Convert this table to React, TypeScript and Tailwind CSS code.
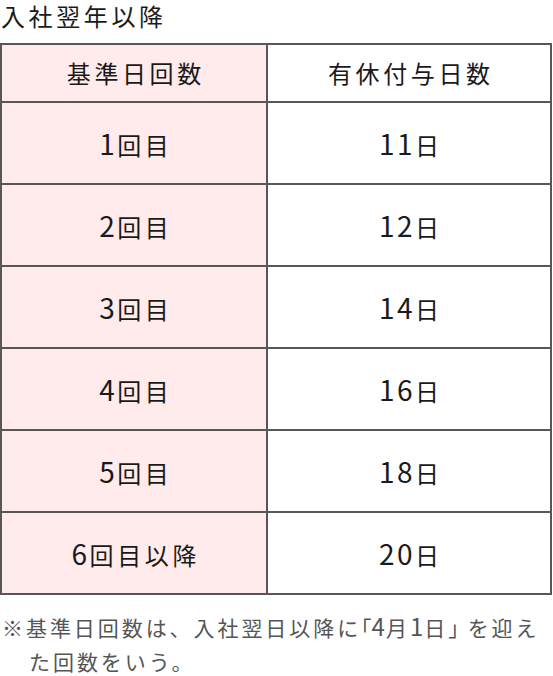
import React from "react";

const rows = [
  ["1回目", "11日"],
  ["2回目", "12日"],
  ["3回目", "14日"],
  ["4回目", "16日"],
  ["5回目", "18日"],
  ["6回目以降", "20日"],
];

function Cell({ text }: { text: string }) {
  const parts = text.split(/(\d+)/).filter((p) => p.length > 0);
  return (
    <span className="mr-[-0.15em]">
      {parts.map((p, i) =>
        /^\d+$/.test(p) ? (
          <span key={i} className="text-[28px] tracking-[2.5px]">
            {p}
          </span>
        ) : (
          <span key={i}>{p}</span>
        )
      )}
    </span>
  );
}

export default function App() {
  return (
    <div
      className="w-[553px] h-[676px] bg-white text-[#1a1a1a]"
      style={{ fontFamily: '"Noto Sans CJK JP", "Noto Sans", sans-serif' }}
    >
      <h1 className="pt-[1px] mb-[12px] text-[24px] leading-[30px] tracking-[0.15em] pl-[1px] font-normal">入社翌年以降</h1>
      <div className="w-[552px] bg-[#575757] p-[2px] grid grid-cols-[264px_282px] gap-[2px]">
        <div className="h-[56px] bg-[#ffebeb] flex items-center justify-center text-[24px] tracking-[0.15em]">
          <span className="mr-[-0.15em]">基準日回数</span>
        </div>
        <div className="h-[56px] bg-white flex items-center justify-center text-[24px] tracking-[0.15em]">
          <span className="mr-[-0.15em]">有休付与日数</span>
        </div>
        {rows.map(([a, b]) => (
          <React.Fragment key={a}>
            <div className="h-[80px] bg-[#ffebeb] flex items-center justify-center text-[24px] tracking-[0.15em]">
              <Cell text={a} />
            </div>
            <div className="h-[80px] bg-white flex items-center justify-center text-[24px] tracking-[0.15em]">
              <Cell text={b} />
            </div>
          </React.Fragment>
        ))}
      </div>
      <p className="mt-[14px] text-[21px] leading-[34px] tracking-[0.14em] text-[#555555] pl-[29px] -indent-[27px]">
        ※基準日回数は、入社翌日以降に<span className="[font-feature-settings:'halt'] tracking-normal">「</span><span className="text-[24px] tracking-[1px]">4</span>月<span className="text-[24px] tracking-[1px]">1</span>日<span className="[font-feature-settings:'halt'] tracking-[9px]">」</span>を迎えた回数をいう。
      </p>
    </div>
  );
}
